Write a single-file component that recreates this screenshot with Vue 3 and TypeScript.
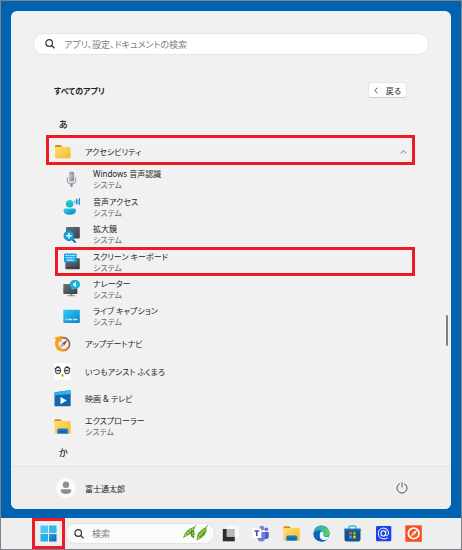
<script setup lang="ts">
import { ref } from 'vue'

interface AppEntry {
  name: string
  icon: string
  system?: boolean
  nested?: boolean
  marked?: boolean
}

const apps: AppEntry[] = [
  { name: 'Windows 音声認識', icon: 'mic', system: true, nested: true },
  { name: '音声アクセス', icon: 'voice', system: true, nested: true },
  { name: '拡大鏡', icon: 'magnifier', system: true, nested: true },
  { name: 'スクリーン キーボード', icon: 'keyboard', system: true, nested: true, marked: true },
  { name: 'ナレーター', icon: 'narrator', system: true, nested: true },
  { name: 'ライブ キャプション', icon: 'caption', system: true, nested: true },
  { name: 'アップデートナビ', icon: 'update' },
  { name: 'いつもアシスト ふくまろ', icon: 'fukumaro' },
  { name: '映画 & テレビ', icon: 'movies' },
  { name: 'エクスプローラー', icon: 'explorer', system: true },
]

const pinned = [
  { icon: 'taskview', label: 'タスク ビュー' },
  { icon: 'teams', label: 'Teams' },
  { icon: 'explorer', label: 'エクスプローラー' },
  { icon: 'edge', label: 'Edge' },
  { icon: 'store', label: 'Store' },
  { icon: 'mail', label: '@' },
  { icon: 'compass', label: 'ナビ' },
]

const query = ref('')
const taskQuery = ref('')
</script>

<template>
  <div class="desktop">
    <svg class="sprites" aria-hidden="true">
      <defs>
        <linearGradient id="gFolder" x1="0" y1="0" x2="1" y2="1"><stop offset="0" stop-color="#ffe07a" /><stop offset="1" stop-color="#f8b91f" /></linearGradient>
        <linearGradient id="gCyan" x1="0" y1="0" x2="1" y2="1"><stop offset="0" stop-color="#35d0ee" /><stop offset="1" stop-color="#0c7bd0" /></linearGradient>
        <linearGradient id="gTeal" x1="0" y1="0" x2="0" y2="1"><stop offset="0" stop-color="#2bd4c0" /><stop offset="1" stop-color="#19a9d0" /></linearGradient>
        <linearGradient id="gGrey" x1="0" y1="0" x2="1" y2="1"><stop offset="0" stop-color="#6a7078" /><stop offset="1" stop-color="#3a3f46" /></linearGradient>
        <linearGradient id="gMic" x1="0" y1="0" x2="1" y2="0"><stop offset="0" stop-color="#b9bfc8" /><stop offset="1" stop-color="#7c848f" /></linearGradient>
        <linearGradient id="gWin" x1="0" y1="0" x2="1" y2="1"><stop offset="0" stop-color="#2a9fdd" /><stop offset="1" stop-color="#0a66b8" /></linearGradient>
        <linearGradient id="gEdge" x1="0" y1="0" x2="1" y2="0.3"><stop offset="0" stop-color="#1fa4dc" /><stop offset="1" stop-color="#55cf62" /></linearGradient>
      </defs>

      <symbol id="folder" viewBox="0 0 17 17">
        <path d="M1 3.2Q1 2 2.2 2H6.5L8.5 4V7H1Z" fill="#cf9216" />
        <rect x="1" y="4" width="15.5" height="11.2" rx="1" fill="url(#gFolder)" />
      </symbol>
      <symbol id="explorer" viewBox="0 0 17 17">
        <path d="M0.5 2.4Q0.5 1.2 1.7 1.2H6.3L8.2 3.2V6H0.5Z" fill="#cf9216" />
        <rect x="0.5" y="3" width="16.2" height="12.6" rx="1" fill="url(#gFolder)" />
        <path d="M3.3 15.7V12.2Q3.3 10.5 5 10.5H12.5Q14.2 10.5 14.2 12.2V15.7Z" fill="#1478cb" />
        <rect x="5.5" y="13.2" width="6.5" height="1.2" rx="0.6" fill="#0b559d" />
      </symbol>
      <symbol id="mic" viewBox="0 0 17 17">
        <path d="M4.3 6.5V8.7Q4.3 12.6 8.5 12.6T12.7 8.7V6.5" fill="none" stroke="#9da5b0" stroke-width="1.2" />
        <rect x="5.8" y="0.5" width="5.4" height="10.3" rx="2.7" fill="url(#gMic)" />
        <path d="M6.2 4H10.8M6.2 6H10.8" stroke="#dfe3e8" stroke-width="0.6" />
        <path d="M7.2 12.6H9.8V14.8L8.5 16.5L7.2 14.8Z" fill="#8b939e" />
      </symbol>
      <symbol id="voice" viewBox="0 0 17 17">
        <circle cx="6.7" cy="5.8" r="3.8" fill="url(#gTeal)" />
        <path d="M0.5 12.3Q0.5 10.6 2.2 10.6H11.3Q13 10.6 13 12.3Q13 16.7 6.7 16.7T0.5 12.3Z" fill="url(#gCyan)" />
        <path d="M11.8 2.8V4.7M13.4 0.8V6.7M15 1.6V6M16.4 0V7" stroke="#1d83d4" stroke-width="1" />
      </symbol>
      <symbol id="magnifier" viewBox="0 0 17 17">
        <rect x="3" y="1" width="13.8" height="11.5" rx="0.7" fill="url(#gGrey)" />
        <path d="M9 13L12 16" stroke="#0878ca" stroke-width="2" stroke-linecap="round" />
        <circle cx="6" cy="9.7" r="4.9" fill="#19a5df" stroke="#0d80cd" stroke-width="1" />
        <path d="M6 7V12.4M3.3 9.7H8.7" stroke="#e9ffff" stroke-width="1.5" />
      </symbol>
      <symbol id="keyboard" viewBox="0 0 17 17">
        <rect x="2.3" y="5.2" width="14.5" height="11" rx="0.7" fill="url(#gGrey)" />
        <path d="M3 14.7H16" stroke="#282d33" stroke-width="0.8" />
        <rect x="1" y="0.6" width="12.7" height="8.6" rx="0.8" fill="#18a5df" />
        <path d="M2.3 2.5H12.5M2.9 4.6H12" stroke="#d9fbff" stroke-width="1.2" stroke-dasharray="1.5 0.8" />
        <path d="M3.8 7.1H10.5" stroke="#d9fbff" stroke-width="1.1" />
      </symbol>
      <symbol id="narrator" viewBox="0 0 17 17">
        <path d="M7 12H9.5V15.2H12V16.3H4.5V15.2H7Z" fill="#8c9298" />
        <rect x="0.3" y="4" width="14" height="10" rx="0.8" fill="url(#gGrey)" />
        <path d="M8.6 10.4L8.2 7.6A5.2 4.6 0 1 1 11 8.9Z" fill="#19b1da" />
        <path d="M10.2 3.5H11.2L13 1.8V7.2L11.2 5.7H10.2Z" fill="#fff" />
      </symbol>
      <symbol id="caption" viewBox="0 0 17 17">
        <rect x="0.3" y="1.8" width="16.5" height="13.2" rx="0.8" fill="url(#gCyan)" />
        <path d="M2.5 11.5H4.3M5 11.5H9.2M10 11.5H14.5" stroke="#a6effd" stroke-width="1.4" />
      </symbol>
      <symbol id="update" viewBox="0 0 17 17">
        <circle cx="9.3" cy="9" r="6.3" fill="#eceff1" stroke="#77736f" stroke-width="1.7" />
        <path d="M13.7 4.7L10.4 10.2L8.3 8Z" fill="#e1241f" />
        <path d="M5.4 13L8.3 8L10.4 10.2Z" fill="#9aa4ad" />
        <path d="M9.8 16.6Q1.2 17 1 8.5Q1 6.3 2 4.3L0.3 2.5L8 0.7L7.2 7.4L5.3 6Q3.8 8.6 5.2 11.4Q6.8 14 10 14.1Z" fill="#f4a11e" />
        <path d="M9.8 16.3Q13.3 16.3 15 13.5L13.2 12.5Q12 14.1 10 14.1Z" fill="#eb8220" />
      </symbol>
      <symbol id="fukumaro" viewBox="0 0 17 17">
        <rect x="0.3" y="0.3" width="16.4" height="16.4" fill="#fff" />
        <ellipse cx="4" cy="7.6" rx="2.6" ry="3.3" fill="#e6e6e6" stroke="#353535" stroke-width="1" />
        <ellipse cx="13" cy="7.6" rx="2.6" ry="3.3" fill="#e6e6e6" stroke="#353535" stroke-width="1" />
        <path d="M0.8 6.2Q3 2.2 6 4.6M16.2 6.2Q14 2.2 11 4.6M2.5 7.6H6.2M10.8 7.6H14.5" fill="none" stroke="#252525" stroke-width="1" />
        <path d="M6.9 11.8Q8.5 10.2 10.1 11.8L8.5 14.4Z" fill="#dda61b" />
      </symbol>
      <symbol id="movies" viewBox="0 0 17 17">
        <path d="M0.5 2.2L15.6 0.3Q16.7 0.3 16.7 1.3V15.5Q16.7 16.3 15.9 16.3H0.5Z" fill="#1266b6" />
        <path d="M0.5 2.4L16.7 0.3V4L0.5 5.2Z" fill="#39b9e8" />
        <path d="M4 2L3 5M8 1.5L7 4.7M12 1L11 4.4" stroke="#2aa2da" stroke-width="1.3" />
        <path d="M6.5 7L12.7 10.6L6.5 14.3Z" fill="#fff" />
      </symbol>
      <symbol id="windows" viewBox="0 0 17 17">
        <path d="M0.5 0.5H8V8H0.5Z" fill="#4ac7f2" />
        <path d="M9 0.5H16.5V8H9Z" fill="#35b7ec" />
        <path d="M0.5 9H8V16.5H0.5Z" fill="#28aee8" />
        <path d="M9 9H16.5V16.5H9Z" fill="url(#gWin)" />
      </symbol>
      <symbol id="taskview" viewBox="0 0 17 17">
        <rect x="0.8" y="4" width="12" height="12.3" fill="#2c2c2c" />
        <rect x="4.8" y="0.3" width="12" height="11.3" fill="#f9f9f9" />
        <path d="M4.8 4H12.8V11.6H4.8Z" fill="#b8b8b8" />
      </symbol>
      <symbol id="teams" viewBox="0 0 17 17">
        <circle cx="14.3" cy="4.2" r="1.8" fill="#6068ca" />
        <circle cx="9.8" cy="3.2" r="2.4" fill="#7780e2" />
        <path d="M12 7H16.7V11.3Q16.7 14 14.2 14H12Z" fill="#5059c2" />
        <path d="M5.5 7H13.2V12.2Q13.2 16.6 9.3 16.6T5.5 12.2Z" fill="#737ce0" />
        <rect x="0.3" y="3.5" width="9" height="9.5" rx="0.6" fill="#fff" />
        <path d="M2.4 6H7.2M4.8 6V11" stroke="#4851b8" stroke-width="1.6" />
      </symbol>
      <symbol id="edge" viewBox="0 0 17 17">
        <circle cx="8.5" cy="8.5" r="8.1" fill="#1470c4" />
        <path d="M0.5 8A8.1 8.1 0 0 1 16.6 8Q16.5 11.4 12.8 11.4Q9.8 11.4 10.8 9.2Q10.8 5.7 7.1 5.3Q2.6 5.2 0.5 8Z" fill="url(#gEdge)" />
        <path d="M10.6 8.2Q9.5 11.9 13.4 12Q15 12 16.2 11.2Q15 14.2 12.4 15.5Q6.3 15.3 6.4 10.5Q6.6 6.5 9 6.4Q10.5 6.8 10.6 8.2Z" fill="#eef7fc" />
        <path d="M6.6 9.2Q5.8 13.4 9.3 15Q12.1 16 14.6 13.8Q12.3 17 8 16.6Q1.1 15.8 0.5 9Q3 5 7 6Q7.8 6.5 6.6 9.2Z" fill="#0d63b7" />
      </symbol>
      <symbol id="store" viewBox="0 0 17 17">
        <path d="M5 4V2.4Q5 1 6.4 1H10.6Q12 1 12 2.4V4" fill="none" stroke="#35b8eb" stroke-width="1.4" />
        <path d="M0.5 3.8H16.5V14.2Q16.5 16.4 14.3 16.4H2.7Q0.5 16.4 0.5 14.2Z" fill="#155392" />
        <path d="M0.5 3.8H16.5V5.6H0.5Z" fill="#1c72b8" />
        <path d="M5.2 6.8H8V9.6H5.2Z" fill="#f25022" />
        <path d="M9 6.8H11.8V9.6H9Z" fill="#7fba00" />
        <path d="M5.2 10.6H8V13.4H5.2Z" fill="#22a5ef" />
        <path d="M9 10.6H11.8V13.4H9Z" fill="#ffb900" />
      </symbol>
      <symbol id="mail" viewBox="0 0 17 17">
        <rect x="1" y="1" width="15.3" height="15.3" rx="1.2" fill="#1c43e6" />
        <ellipse cx="8.3" cy="8.4" rx="2.3" ry="2.6" fill="none" stroke="#fff" stroke-width="1.1" />
        <path d="M11 5.5L10.5 9.4Q10.6 11.2 12 10.7Q14 9.5 13.6 7Q12.8 3.2 8.7 3.1Q3.5 3.4 3.3 8.5Q3.6 13.9 9 13.9Q11 13.9 12.6 12.8" fill="none" stroke="#fff" stroke-width="1" />
      </symbol>
      <symbol id="compass" viewBox="0 0 17 17">
        <rect x="0.3" y="0.3" width="16.5" height="16.5" fill="#f8501f" />
        <circle cx="8.7" cy="8.4" r="5.3" fill="none" stroke="#fff" stroke-width="1.8" />
        <path d="M12.4 4.7L10 9.5L7.6 7.4Z" fill="#fff" />
        <path d="M10 9.5L5.2 12L7.6 7.4Z" fill="#ffc9b8" />
      </symbol>
      <symbol id="search" viewBox="0 0 10 10">
        <circle cx="4.2" cy="4" r="3.3" fill="none" stroke="currentColor" stroke-width="1.2" />
        <path d="M6.6 6.4L9.5 9.3" stroke="currentColor" stroke-width="1.3" />
      </symbol>
      <symbol id="beans" viewBox="0 0 26 17">
        <path d="M1 13Q3 4.5 13 1.5Q13.3 7.5 1 13Z" fill="#5da62b" />
        <path d="M9 6Q14 3 12 13Q7.5 12 9 6Z" fill="#3d8b20" />
        <path d="M14.5 15.5Q14 6.5 24.5 1.8Q26 11 14.5 15.5Z" fill="#5aa528" />
        <path d="M3.2 11Q7 6 11.5 3.5M16 13.5Q19 7.5 23.5 4M10.5 7L11.3 11" fill="none" stroke="#c0dc60" stroke-width="1.5" stroke-dasharray="2 1" />
        <path d="M13 1.5L14 0.3M24.5 1.8L25.5 0.5" stroke="#36751f" stroke-width="1" />
      </symbol>
    </svg>

    <main class="start">
      <label class="search">
        <svg class="glass" aria-hidden="true"><use href="#search" /></svg>
        <input v-model="query" type="text" placeholder="アプリ、設定、ドキュメントの検索" />
      </label>

      <header class="heading">
        <h1>すべてのアプリ</h1>
        <button class="back" type="button">
          <svg viewBox="0 0 4 7" aria-hidden="true"><path d="M3.4 0.7L0.8 3.5L3.4 6.3" fill="none" stroke="currentColor" /></svg>
          戻る
        </button>
      </header>

      <section class="list">
        <h2 class="letter">あ</h2>
        <button class="row group" type="button" aria-expanded="true">
          <svg class="icon" aria-hidden="true"><use href="#folder" /></svg>
          <span class="label">アクセシビリティ</span>
          <svg class="chevron" viewBox="0 0 7 4" aria-hidden="true"><path d="M0.7 3.4L3.5 0.8L6.3 3.4" fill="none" stroke="currentColor" /></svg>
        </button>
        <a v-for="app in apps" :key="app.name" href="#" class="row" :class="{ nested: app.nested, marked: app.marked }">
          <svg class="icon" aria-hidden="true"><use :href="'#' + app.icon" /></svg>
          <span class="label">
            {{ app.name }}
            <small v-if="app.system">システム</small>
          </span>
        </a>
        <h2 class="letter">か</h2>
      </section>

      <footer class="account">
        <a class="user" href="#">
          <svg class="avatar" viewBox="0 0 20 20" aria-hidden="true">
            <circle cx="10" cy="10" r="10" fill="#fbfbfb" />
            <circle cx="10" cy="6.7" r="3.2" fill="#8f8f8f" />
            <path d="M4.8 12.5Q4.8 11.3 6 11.3H14Q15.2 11.3 15.2 12.5Q15.2 16 10 16T4.8 12.5Z" fill="#8f8f8f" />
          </svg>
          富士通太郎
        </a>
        <button class="power" type="button" aria-label="電源">
          <svg viewBox="0 0 12 12" aria-hidden="true"><path d="M3.8 1.6A5 5 0 1 0 8.2 1.6M6 0.3V5.3" fill="none" stroke="currentColor" /></svg>
        </button>
      </footer>
      <span class="thumb"></span>
    </main>

    <nav class="taskbar">
      <button class="launcher" type="button" aria-label="スタート">
        <svg class="icon" aria-hidden="true"><use href="#windows" /></svg>
      </button>
      <label class="task-search">
        <svg class="glass" aria-hidden="true"><use href="#search" /></svg>
        <input v-model="taskQuery" type="text" placeholder="検索" />
        <svg class="beans" aria-hidden="true"><use href="#beans" /></svg>
      </label>
      <div class="pinned">
        <button v-for="pin in pinned" :key="pin.icon" type="button" :aria-label="pin.label">
          <svg class="icon" aria-hidden="true"><use :href="'#' + pin.icon" /></svg>
        </button>
      </div>
    </nav>
  </div>
</template>

<style>
body {
  margin: 0;
}
</style>

<style scoped>
.desktop {
  box-sizing: border-box;
  display: flex;
  flex-direction: column;
  min-height: 100vh;
  border: 1px solid #808488;
  background: #0063b1;
  color: #1f1f1f;
  font: 8px/11px "Noto Sans", "Noto Sans CJK JP", sans-serif;
  font-feature-settings: "palt";
}

.desktop * {
  box-sizing: border-box;
}

button,
input {
  border: 0;
  padding: 0;
  background: none;
  color: inherit;
  font: inherit;
  font-feature-settings: inherit;
}

a {
  color: inherit;
  text-decoration: none;
}

svg {
  display: block;
  flex: none;
}

.sprites {
  position: absolute;
  width: 0;
  height: 0;
}

.icon {
  width: 17px;
  height: 17px;
}

.glass {
  width: 10px;
  height: 10px;
  color: #333;
}

.start {
  position: relative;
  flex: 1;
  display: flex;
  flex-direction: column;
  margin: 10px 10px 9px;
  border-radius: 6px;
  background: #f1f1f1;
  overflow: hidden;
}

.search {
  display: flex;
  align-items: center;
  gap: 9px;
  height: 22px;
  margin: 22px 22px 0;
  padding: 0 11px;
  border: 1px solid #e6e6e6;
  border-radius: 11px;
  background: #fff;
}

.search input,
.task-search input {
  flex: 1;
  width: 0;
  height: 16px;
  outline: none;
  font-size: 9px;
}

input::placeholder {
  color: #808080;
  opacity: 1;
}

.heading {
  display: flex;
  align-items: center;
  justify-content: space-between;
  height: 18px;
  margin: 26px 44px 0 43px;
}

h1,
h2 {
  margin: 0;
  font-size: 8px;
}

.back {
  display: flex;
  align-items: center;
  gap: 8px;
  height: 16px;
  padding: 0 5px;
  border: 1px solid #e6e6e6;
  border-bottom-color: #cfcfcf;
  border-radius: 3px;
  background: #fdfdfd;
}

.back svg {
  width: 4px;
  height: 7px;
  color: #555;
}

.list {
  flex: 1;
  display: grid;
  grid-template-rows: 26px repeat(11, 1fr) 26px;
  margin: 13px 36px 0 35px;
}

.letter {
  padding-left: 13px;
  font-size: 9px;
  font-weight: 500;
  line-height: 26px;
}

.row {
  position: relative;
  display: flex;
  align-items: center;
  gap: 14px;
  padding-left: 8px;
  text-align: left;
}

.nested {
  margin-left: 9px;
  gap: 13px;
}

.label {
  flex: 1;
}

small {
  display: block;
  color: #6d6d6d;
  font-size: 8px;
}

.chevron {
  width: 7px;
  height: 4px;
  margin-right: 8px;
  color: #777;
}

.group::after,
.marked::after,
.launcher::after {
  content: "";
  position: absolute;
  inset: -1px 0;
  border: 3px solid #ed1c24;
}

.group::after {
  inset: -3px 0 0;
}

.launcher::after {
  inset: 0;
}

.account {
  display: flex;
  align-items: center;
  justify-content: space-between;
  height: 43px;
  padding: 0 43px 0 45px;
  border-top: 1px solid #e3e3e3;
  background: #eee;
}

.user {
  display: flex;
  align-items: center;
  gap: 9px;
}

.avatar {
  width: 20px;
  height: 20px;
}

.power svg {
  width: 12px;
  height: 12px;
  color: #555;
}

.thumb {
  position: absolute;
  right: 3px;
  top: 61%;
  width: 2px;
  height: 31px;
  border-radius: 1px;
  background: #808080;
}

.taskbar {
  display: flex;
  align-items: center;
  height: 31px;
  padding: 0 32px 0 31px;
  background: #eee;
}

.launcher {
  position: relative;
  display: grid;
  place-items: center;
  width: 33px;
  height: 31px;
}

.task-search {
  flex: 0 1 150px;
  display: flex;
  align-items: center;
  gap: 8px;
  min-width: 0;
  height: 21px;
  padding: 0 6px 0 8px;
  border: 1px solid #e3e3e3;
  border-radius: 11px;
  background: #fbfbfb;
}

.beans {
  width: 26px;
  height: 17px;
}

.pinned {
  flex: 1;
  display: flex;
  justify-content: space-around;
}
</style>
